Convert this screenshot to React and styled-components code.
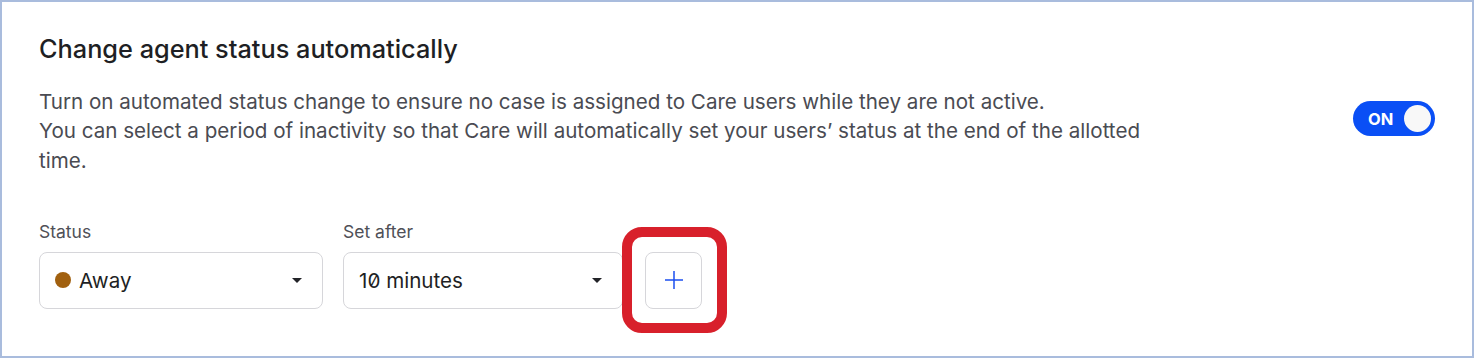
import React from "react";
import styled, { createGlobalStyle } from "styled-components";

const GlobalStyle = createGlobalStyle`
  html, body {
    margin: 0;
    padding: 0;
    background: #ffffff;
  }
  body {
    font-family: Inter, "Noto Sans", sans-serif;
    -webkit-font-smoothing: antialiased;
  }
`;

const Card = styled.section`
  box-sizing: border-box;
  width: 1474px;
  height: 358px;
  border: 2px solid #a9bcdd;
  background: #fff;
  padding: 28px 37px 0 37px;
`;

const Title = styled.h2`
  margin: 0;
  font-size: 25.3px;
  line-height: 38px;
  font-weight: 500;
  color: #1e1f24;
`;

const TopRow = styled.div`
  display: flex;
  align-items: flex-start;
  justify-content: space-between;
  margin-top: 19px;
`;

const Description = styled.p`
  margin: 0;
  font-size: 20.6px;
  line-height: 29.3px;
  color: #4a4b52;
`;

const Toggle = styled.button`
  display: flex;
  align-items: center;
  justify-content: space-between;
  box-sizing: border-box;
  width: 82px;
  height: 35px;
  margin: 14px 0 0 0;
  padding: 0 4px 0 15px;
  border: none;
  border-radius: 18px;
  background: ${(p) => (p.$on ? "#0a4ff5" : "#c3c5cc")};
  color: #fff;
  font-family: Inter, sans-serif;
  font-size: 16.5px;
  font-weight: 700;
  cursor: pointer;
`;

const Knob = styled.span`
  width: 27px;
  height: 27px;
  border-radius: 50%;
  background: #f8f8f8;
`;

const Fields = styled.div`
  display: flex;
  align-items: flex-end;
  gap: 20px;
  margin-top: 47px;
`;

const Field = styled.div`
  display: flex;
  flex-direction: column;
  gap: 10px;
`;

const Label = styled.label`
  font-size: 17.5px;
  line-height: 20px;
  color: #4f5057;
`;

const Select = styled.div`
  box-sizing: border-box;
  display: flex;
  align-items: center;
  gap: 8px;
  width: ${(p) => p.$width}px;
  height: 57px;
  padding: 0 20px 0 15px;
  border: 1px solid #d6d6da;
  border-radius: 8px;
  font-size: 20.6px;
  color: #1e1f24;
`;

const Dot = styled.span`
  width: 16px;
  height: 16px;
  border-radius: 50%;
  background: ${(p) => p.$color};
  flex: none;
`;

const Value = styled.span`
  flex: 1;
  font-feature-settings: "zero" 1;
`;

const Caret = styled.span`
  width: 0;
  height: 0;
  border-left: 5px solid transparent;
  border-right: 5px solid transparent;
  border-top: 5px solid #222328;
`;

const Highlight = styled.div`
  position: relative;
  margin-left: 2px;
`;

const Ring = styled.div`
  position: absolute;
  top: -25px;
  left: -23px;
  right: -25px;
  bottom: -24px;
  border: 10px solid #d8202b;
  border-radius: 20px;
  pointer-events: none;
`;

const AddButton = styled.button`
  display: flex;
  align-items: center;
  justify-content: center;
  box-sizing: border-box;
  width: 57px;
  height: 57px;
  padding: 0;
  border: 1px solid #d6d6da;
  border-radius: 8px;
  background: #fff;
  cursor: pointer;
`;

const PlusIcon = () => (
  <svg width="18" height="18" viewBox="0 0 18 18">
    <path d="M9 0v18M0 9h18" stroke="#1c4ff0" strokeWidth="1.5" />
  </svg>
);

export default function App() {
  return (
    <>
      <GlobalStyle />
      <Card>
        <Title>Change agent status automatically</Title>
        <TopRow>
          <Description>
            Turn on automated status change to ensure no case is assigned to Care users while they are not active.
            <br />
            You can select a period of inactivity so that Care will automatically set your users’ status at the end of the allotted
            <br />
            time.
          </Description>
          <Toggle $on>
            ON
            <Knob />
          </Toggle>
        </TopRow>
        <Fields>
          <Field>
            <Label>Status</Label>
            <Select $width={284}>
              <Dot $color="#a1600f" />
              <Value>Away</Value>
              <Caret />
            </Select>
          </Field>
          <Field>
            <Label>Set after</Label>
            <Select $width={280}>
              <Value>10 minutes</Value>
              <Caret />
            </Select>
          </Field>
          <Highlight>
            <AddButton aria-label="Add">
              <PlusIcon />
            </AddButton>
            <Ring />
          </Highlight>
        </Fields>
      </Card>
    </>
  );
}
